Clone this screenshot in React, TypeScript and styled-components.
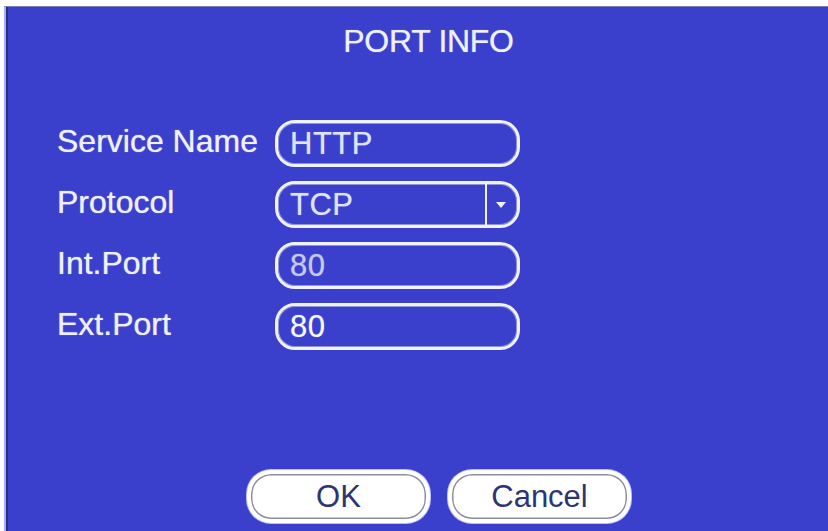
import styled, { createGlobalStyle } from "styled-components"

const GlobalStyle = createGlobalStyle`
    html, body {
        margin: 0;
        padding: 0;
        background: #ffffff;
        font-family: "Liberation Sans", Arial, sans-serif;
    }
    #root {
        height: 531px;
        overflow: hidden;
    }
`

const Page = styled.div`
    height: 531px;
    padding: 6px 0 0 4px;
    box-sizing: border-box;
`

const Frame = styled.div`
    height: 525px;
    box-sizing: border-box;
    display: flex;
    flex-direction: column;
    background: #3a40cc;
    border-top: 1px solid #7a80b8;
    border-left: 2px solid #a3aeff;
    box-shadow: inset 2px 0 0 #2a2f78;
    padding-left: 3px;
`

const Title = styled.div`
    padding: 16px 0 0 20px;
    line-height: 36px;
    font-size: 32px;
    letter-spacing: -0.3px;
    text-align: center;
    color: #eef0ff;
    text-shadow: 0 0 1px rgba(240, 242, 255, 0.7);
`

const Form = styled.div`
    margin-top: 61px;
    padding-left: 48px;
    display: grid;
    grid-template-columns: 218px 245px;
    grid-auto-rows: 47px;
    row-gap: 14px;
    align-items: center;
`

const Label = styled.div`
    font-size: 32px;
    color: #eef0ff;
    padding-bottom: 4px;
    white-space: nowrap;
    text-shadow: 0 0 1px rgba(240, 242, 255, 0.8);
`

const Field = styled.div`
    height: 47px;
    box-sizing: border-box;
    border: 3px solid #f1f2ff;
    border-radius: 20px;
    box-shadow: inset 0 0 0 1px #8e95d6;
    display: flex;
    align-items: center;
    overflow: hidden;
`

const Value = styled.div<{ $dim?: boolean; $bright?: boolean }>`
    flex: 1;
    padding-left: 12px;
    font-size: 31px;
    letter-spacing: 0.5px;
    color: ${p => (p.$dim ? "#c4c8ec" : p.$bright ? "#f7f8ff" : "#dfe3ff")};
    text-shadow: 0 0 1px rgba(230, 233, 255, 0.6);
`

const DropButton = styled.div`
    width: 27px;
    align-self: stretch;
    border-left: 2px solid #f1f2ff;
    display: flex;
    align-items: center;
    justify-content: center;
    padding: 2px 3px 0 0;
`

const Buttons = styled.div`
    margin-top: 120px;
    padding-left: 238px;
    display: flex;
    gap: 18px;
`

const Button = styled.div`
    width: 183px;
    height: 53px;
    box-sizing: border-box;
    border: 4px solid #ffffff;
    border-radius: 24px;
    background: #ffffff;
    box-shadow: inset 0 0 0 1.5px #8c8e9e, 0 0 0 1px #b8beff;
    display: flex;
    align-items: center;
    justify-content: center;
    font-size: 31px;
    color: #2d3476;
`

function Arrow() {
    return (
        <svg width="10" height="7" viewBox="0 0 10 7">
            <polygon points="0,0 10,0 5,6" fill="#f1f2ff" />
        </svg>
    )
}

function App() {
    return (
        <>
            <GlobalStyle />
            <Page>
                <Frame>
                    <Title>PORT INFO</Title>
                    <Form>
                        <Label>Service Name</Label>
                        <Field>
                            <Value>HTTP</Value>
                        </Field>
                        <Label>Protocol</Label>
                        <Field>
                            <Value>TCP</Value>
                            <DropButton>
                                <Arrow />
                            </DropButton>
                        </Field>
                        <Label>Int.Port</Label>
                        <Field>
                            <Value $dim>80</Value>
                        </Field>
                        <Label>Ext.Port</Label>
                        <Field>
                            <Value $bright>80</Value>
                        </Field>
                    </Form>
                    <Buttons>
                        <Button>OK</Button>
                        <Button>Cancel</Button>
                    </Buttons>
                </Frame>
            </Page>
        </>
    )
}

export default App
